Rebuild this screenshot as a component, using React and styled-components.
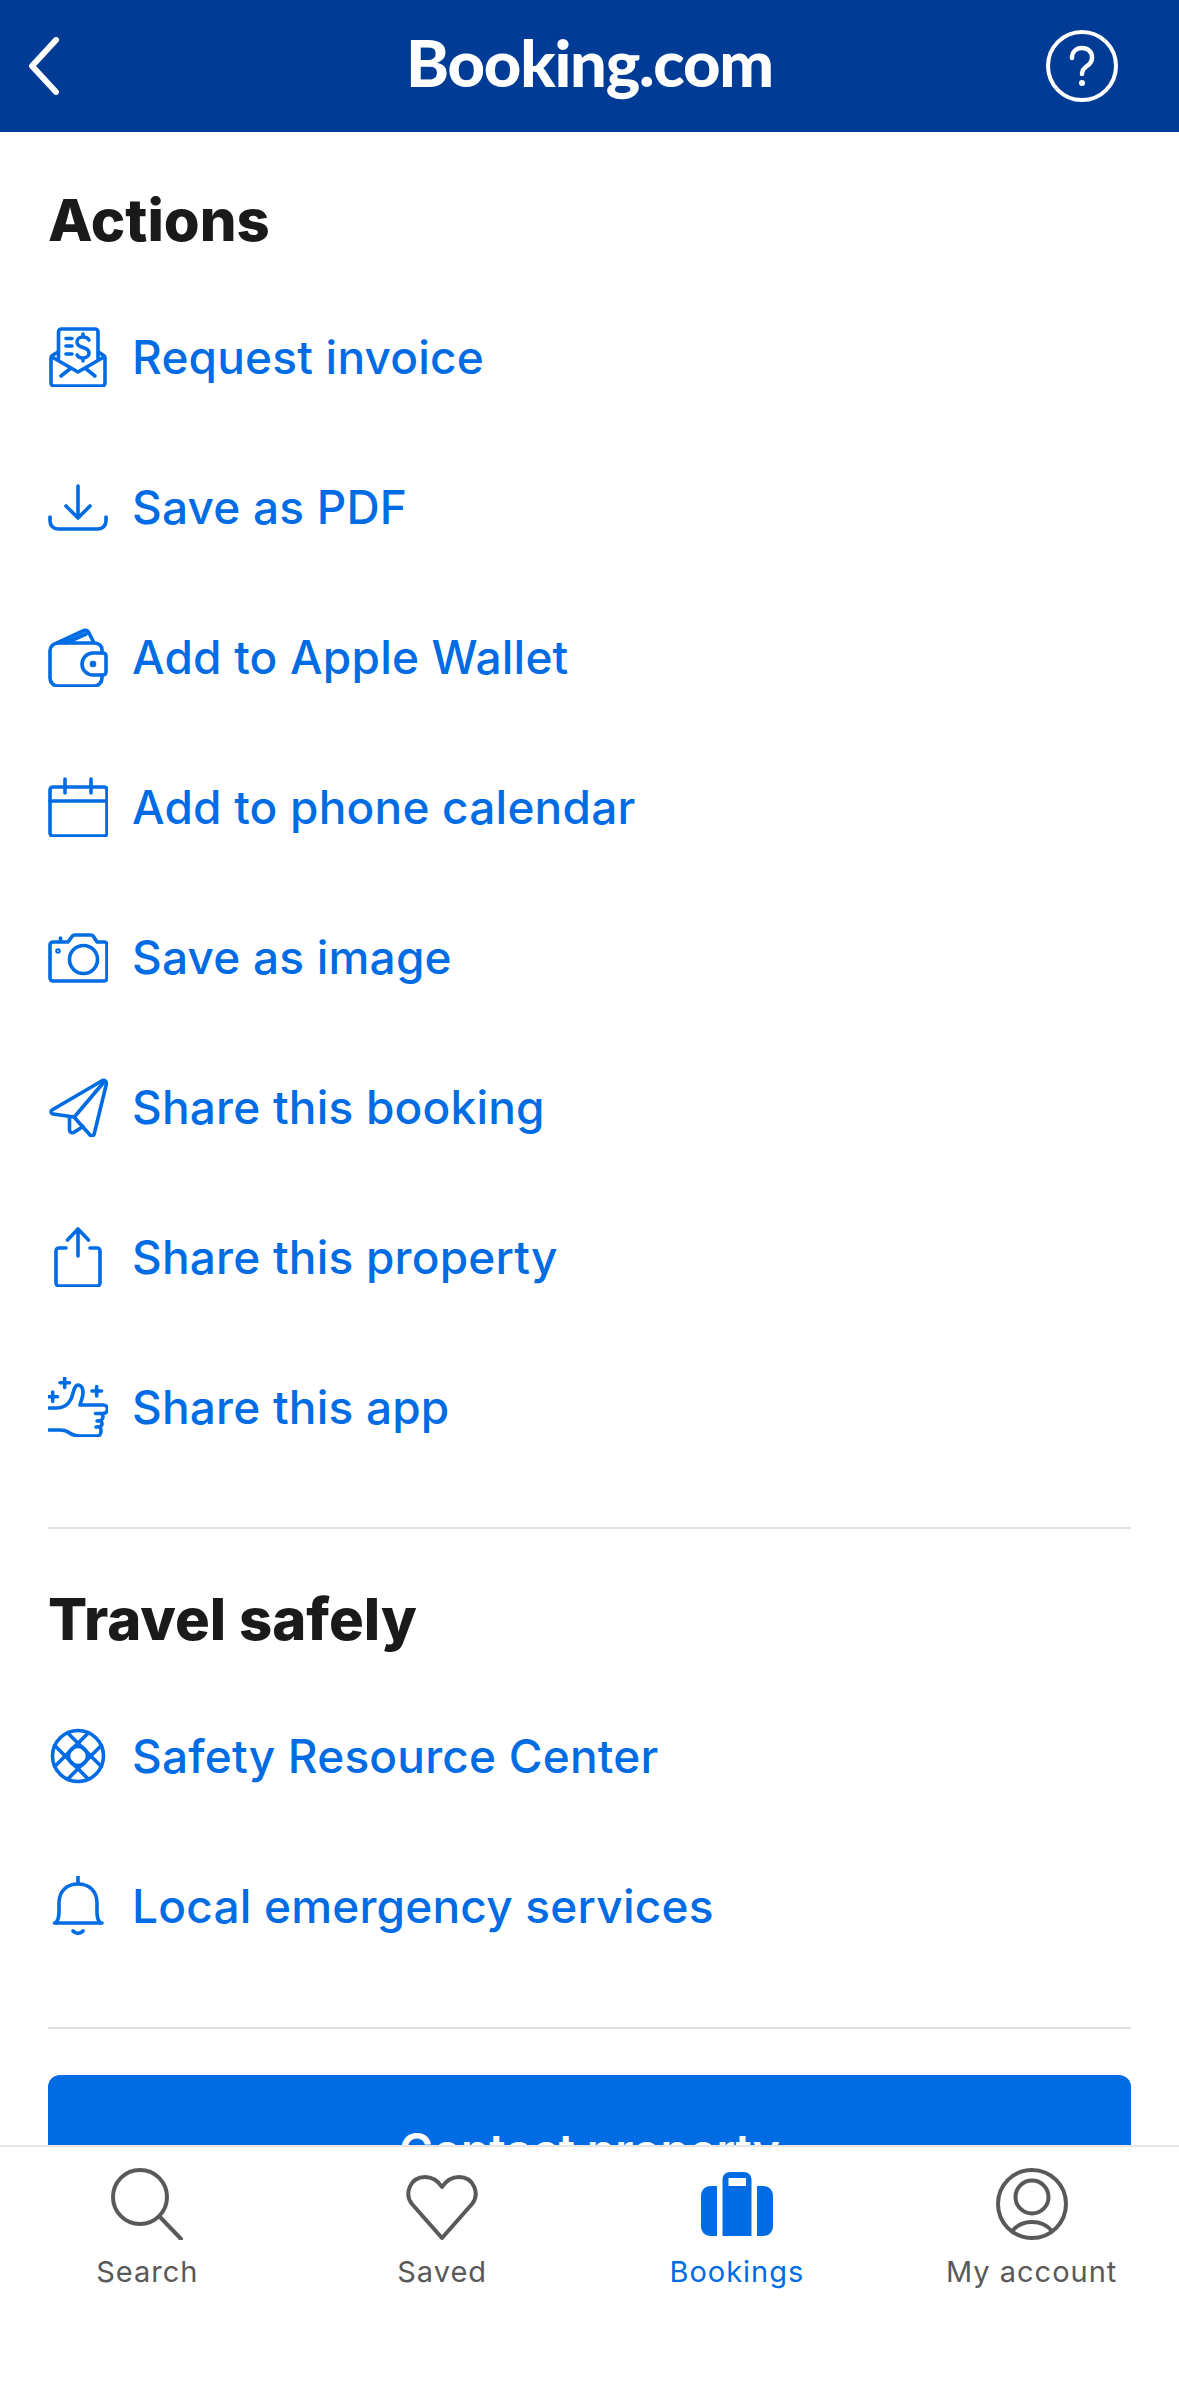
import React from "react";
import styled, { createGlobalStyle } from "styled-components";

const GlobalStyle = createGlobalStyle`
  html, body {
    margin: 0;
    padding: 0;
    background: #fff;
    font-family: Inter, "Liberation Sans", sans-serif;
  }
`;

const Page = styled.div`
  width: 1179px;
  height: 2396px;
  display: flex;
  flex-direction: column;
  overflow: hidden;
  background: #fff;
`;

const Header = styled.header`
  height: 132px;
  flex: none;
  background: #003b95;
  display: grid;
  grid-template-columns: 1fr auto 1fr;
  align-items: center;
  padding: 0 61px;
`;

const HeaderIcon = styled.svg`
  display: block;
  fill: none;
  stroke: #fff;
  stroke-linecap: round;
  stroke-linejoin: round;
  justify-self: ${props => props.$side};
  margin-left: ${props => props.$shift || 0}px;
`;

const Logo = styled.div`
  font-family: Lato, sans-serif;
  font-size: 65px;
  font-weight: 900;
  letter-spacing: -1.2px;
  color: #fff;
  line-height: 1;
  margin-top: -7px;
`;

const Main = styled.main`
  flex: 1;
  min-height: 0;
  overflow: hidden;
  padding: 0 48px;
`;

const SectionTitle = styled.h2`
  margin: 0;
  font-size: 58px;
  font-weight: 800;
  line-height: 72px;
  color: #1a1a1a;
  padding-top: ${props => props.$top}px;
`;

const ActionList = styled.ul`
  list-style: none;
  margin: 0;
  padding: 0;
  padding-top: 26px;
`;

const ActionRow = styled.li`
  height: 150px;
  display: flex;
  align-items: center;
  gap: 24px;
  color: #006ce4;
  font-size: 46px;
  font-weight: 500;
  letter-spacing: 0.2px;
`;

const ActionIcon = styled.svg`
  width: 60px;
  height: 60px;
  flex: none;
  fill: none;
  stroke: #006ce4;
  stroke-width: 3.6;
  stroke-linecap: round;
  stroke-linejoin: round;
`;

const Divider = styled.hr`
  border: none;
  height: 2px;
  margin: ${props => props.$top}px 0 0;
  background: #dfdfdf;
`;

const ContactButton = styled.button`
  display: block;
  width: 100%;
  height: 150px;
  margin-top: 46px;
  border: none;
  border-radius: 12px;
  background: #006ce4;
  color: #fff;
  font-family: inherit;
  font-size: 46px;
  font-weight: 600;
`;

const Nav = styled.nav`
  height: 251px;
  flex: none;
  background: #fff;
  border-top: 2px solid #e6e6e6;
  box-sizing: border-box;
  display: grid;
  grid-template-columns: repeat(4, 1fr);
`;

const NavItem = styled.div`
  display: flex;
  flex-direction: column;
  align-items: center;
  padding-top: 21px;
  color: ${props => (props.$active ? "#006ce4" : "#595959")};
  font-size: 29px;
  letter-spacing: 1px;
`;

const NavIcon = styled.svg`
  width: 72px;
  height: 72px;
  display: block;
  fill: none;
  stroke: currentColor;
  stroke-width: 4;
  stroke-linecap: round;
  stroke-linejoin: round;
`;

const FilledPath = styled.path`
  fill: currentColor;
  fill-rule: evenodd;
  stroke: none;
`;

const NavLabel = styled.span`
  margin-top: 12px;
  line-height: 40px;
`;

const icons = {
  invoice: (
    <>
      <path d="M10.500 32V5a3 3 0 0 1 3-3H47a3 3 0 0 1 3 3v27" />
      <path d="M10 25l-5 3q-2 1-2 3v25a3 3 0 0 0 3 3h48a3 3 0 0 0 3-3V31q0-2-2-3l-4.500-3" />
      <path d="M4 30l26 15 26-15M13 49l10-8M47 49l-10-8" />
      <path d="M18 11.500h6M18 19h6M18 27h6" />
      <path d="M41 13c-1-2-3-3-6-3-3.500 0-6 2-6 5s2.500 4.500 6 5.500 6 2.500 6 5.500-3 5-6 5c-3 0-5-1-6-3M35 7v3M35 31v3" />
    </>
  ),
  download: (
    <>
      <path d="M30 9v31M18 29l12 12 12-12" />
      <path d="M2 40v4a8 8 0 0 0 8 8h40a8 8 0 0 0 8-8v-4" />
    </>
  ),
  wallet: (
    <>
      <path d="M54 26v-3a7 7 0 0 0-7-7H10a8 8 0 0 0-8 8v27a8 8 0 0 0 8 8h36a8 8 0 0 0 8-8v-3" />
      <path d="M45 26h10a3 3 0 0 1 3 3v16a3 3 0 0 1-3 3H45a11 11 0 0 1 0-22z" />
      <path d="M9 16l27-12.500a3.500 3.500 0 0 1 4.500 1.500L46 16M18 16l20-9" />
      <circle cx="45" cy="37" r="1.500" />
    </>
  ),
  calendar: (
    <>
      <rect x="2" y="10" width="57" height="49" rx="3" />
      <path d="M2 24h57M17 2v14M43 2v14" />
    </>
  ),
  camera: (
    <>
      <path d="M5 15h15l4-5.500a3 3 0 0 1 2.500-1.500H43a3 3 0 0 1 2.500 1.500L49 15h7a3 3 0 0 1 3 3v33a3 3 0 0 1-3 3H5a3 3 0 0 1-3-3V18a3 3 0 0 1 3-3z" />
      <circle cx="35.500" cy="32.500" r="14" />
      <circle cx="10" cy="24" r="1" />
      <path d="M12.500 11v3" />
    </>
  ),
  plane: (
    <>
      <path d="M54.500 3.500L4 33a2.200 2.200 0 0 0 1 4l21 3 16 18a2.500 2.500 0 0 0 4.200-1L58.500 6.500a3 3 0 0 0-4-3z" />
      <path d="M56 5L28 38l-2 2" />
      <path d="M21.500 41v12a3 3 0 0 0 5 2l8.500-5.500" />
    </>
  ),
  share: (
    <>
      <path d="M30 29V2M19.500 13L30 2l10.500 11" />
      <path d="M18 21h-7a3 3 0 0 0-3 3v32a3 3 0 0 0 3 3h38a3 3 0 0 0 3-3V24a3 3 0 0 0-3-3h-7" />
    </>
  ),
  thumb: (
    <>
      <path d="M16.700 1v9.500M12 5.700h9.500M4.700 15v9.500M0 19.700h9.500M48.700 9.500v9.500M44 14h9.500" />
      <path d="M1 31h8c6 0 11-3 14-9 2-4 3-14 7-14 4 0 5 5 5 8 0 4-2 8-3 12h23c3 0 4.500 2 4.500 4 0 3-2 4.500-5 4.500h-7" />
      <path d="M54 37c1 1 1 2 1 3 0 2-2 4-6 4M53 44c1 1 1 2 1 3 0 2-2 3-6 3M52 50c1 1 1 2 1 4s-1 5-4 5H32c-4 0-8-1-12-4-3-2-5-2-8-2H1" />
    </>
  ),
  lifebuoy: (
    <>
      <circle cx="30" cy="30" r="25.500" />
      <circle cx="30" cy="30" r="9.500" />
      <path d="M19.500 6.700L53.300 40.500M6.700 19.500L40.500 53.300M40.500 6.700L6.700 40.500M53.300 19.500L19.500 53.300" />
    </>
  ),
  bell: (
    <>
      <path d="M30 1v6" />
      <path d="M6.500 47h47.500" />
      <path d="M8 47c2-3 3-6 3-10V27C11 15 19 8 30 8s19 7 19 19v10c0 4 1 7 3 10" />
      <path d="M25 55a6.500 6.500 0 0 0 10 0" />
    </>
  ),
};

const actions = [
  { icon: "invoice", label: "Request invoice" },
  { icon: "download", label: "Save as PDF" },
  { icon: "wallet", label: "Add to Apple Wallet" },
  { icon: "calendar", label: "Add to phone calendar" },
  { icon: "camera", label: "Save as image" },
  { icon: "plane", label: "Share this booking" },
  { icon: "share", label: "Share this property" },
  { icon: "thumb", label: "Share this app" },
];

const safety = [
  { icon: "lifebuoy", label: "Safety Resource Center" },
  { icon: "bell", label: "Local emergency services" },
];

const Actions = ({ items }) => (
  <ActionList>
    {items.map((item) => (
      <ActionRow key={item.label}>
        <ActionIcon viewBox="0 0 60 60">{icons[item.icon]}</ActionIcon>
        {item.label}
      </ActionRow>
    ))}
  </ActionList>
);

const App = () => {
  return (
    <Page>
      <GlobalStyle />
      <Header>
        <HeaderIcon $side="start" $shift={-33} width="32" height="58" viewBox="0 0 32 58" strokeWidth="6">
          <path d="M28 3L4 29l24 26" />
        </HeaderIcon>
        <Logo>Booking.com</Logo>
        <HeaderIcon $side="end" width="72" height="72" viewBox="0 0 72 72" strokeWidth="4">
          <circle cx="36" cy="36" r="34" />
          <path d="M26 28c0-6 4-10 10-10s10 4 10 9.500c0 4-2 6.500-5 8.500-3 2-5 4-5 8" strokeWidth="4.500" />
          <circle cx="36" cy="53" r="1.500" strokeWidth="3" />
        </HeaderIcon>
      </Header>
      <Main>
        <SectionTitle $top={52}>Actions</SectionTitle>
        <Actions items={actions} />
        <Divider $top={45} />
        <SectionTitle $top={54}>Travel safely</SectionTitle>
        <Actions items={safety} />
        <Divider $top={46} />
        <ContactButton>Contact property</ContactButton>
      </Main>
      <Nav>
        <NavItem>
          <NavIcon viewBox="0 0 72 72">
            <circle cx="29" cy="29" r="27" />
            <path d="M49 49l21 22" />
          </NavIcon>
          <NavLabel>Search</NavLabel>
        </NavItem>
        <NavItem>
          <NavIcon viewBox="0 0 72 72">
            <path d="M36 70L6 36C-2 26 4 9 19 9c8 0 13 4 17 10 4-6 9-10 17-10 15 0 21 17 13 27z" />
          </NavIcon>
          <NavLabel>Saved</NavLabel>
        </NavItem>
        <NavItem $active>
          <NavIcon viewBox="0 0 72 72">
            <FilledPath d="M16 68H10C4 68 0 64 0 58V28c0-6 4-10 10-10h6zM56 68h6c6 0 10-4 10-10V28c0-6-4-10-10-10h-6zM21.500 68V12c0-5 3-8 8-8h13c5 0 8 3 8 8v56zM27.500 10v8H45v-8z" />
          </NavIcon>
          <NavLabel>Bookings</NavLabel>
        </NavItem>
        <NavItem>
          <NavIcon viewBox="0 0 72 72">
            <circle cx="36" cy="36" r="34" />
            <circle cx="36" cy="29" r="16.500" />
            <path d="M16 63c5-6 12-9 20-9s15 3 20 9" />
          </NavIcon>
          <NavLabel>My account</NavLabel>
        </NavItem>
      </Nav>
    </Page>
  );
};

export default App;
